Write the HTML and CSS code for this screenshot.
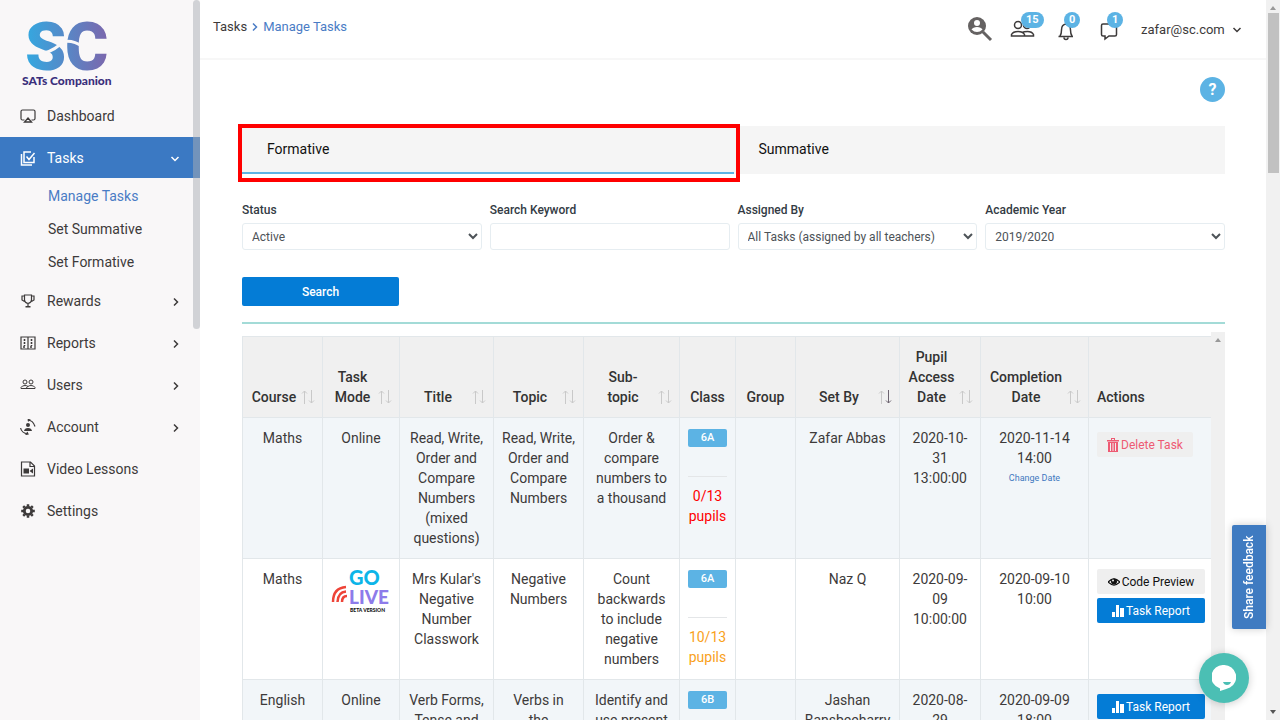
FILE: index.html
```html
<!DOCTYPE html>
<html lang="en">
<head>
  <meta charset="UTF-8">
  <meta name="viewport" content="width=device-width, initial-scale=1.0">
  <title>Manage Tasks - SATs Companion</title>
  <link rel="stylesheet" href="styles.css">
</head>
<body>
<svg class="defs" aria-hidden="true">
  <symbol id="sort" viewBox="0 0 14 16">
    <path d="M3.5 15V2M1 4.5L3.5 2L6 4.5" fill="none" stroke="#c9c9c9"/>
    <path class="down" d="M10.500 1v13M8 11.500L10.500 14L13 11.500" fill="none" stroke="currentColor"/>
  </symbol>
  <symbol id="right" viewBox="0 0 8 10"><path d="M2 1.500L5.500 5L2 8.500" fill="none" stroke="currentColor" stroke-width="1.500"/></symbol>
  <symbol id="down" viewBox="0 0 10 8"><path d="M1.500 2L5 5.500L8.500 2" fill="none" stroke="currentColor" stroke-width="1.500"/></symbol>
  <symbol id="bars" viewBox="0 0 12 12"><path d="M0 7h3v5H0zM4 0h3v12H4zM8 3h4v9H8z" fill="currentColor"/></symbol>
</svg>

<div class="app">
  <aside class="sidebar">
    <div class="logo">
      <svg viewBox="0 0 90 54" role="img" aria-label="SC">
        <defs>
          <linearGradient id="brand" gradientUnits="userSpaceOnUse" x1="4" y1="0" x2="84" y2="0">
            <stop offset="0" stop-color="#34a8e0"/>
            <stop offset="1" stop-color="#7a68ae"/>
          </linearGradient>
        </defs>
        <g class="logo-mark" fill="url(#brand)">
          <text x="3" y="50">S</text>
          <text x="43" y="50">C</text>
        </g>
        <path d="M22 33C30 31 36 27 40 22C48 20 54 22 61 27" fill="none" stroke="#f9f7f8" stroke-width="3"/>
      </svg>
      <span>SATs Companion</span>
    </div>
    <nav>
      <a class="nav-item" href="#">
        <svg viewBox="0 0 16 16"><path d="M4.500 12H2.500Q1 12 1 10.500V3.500Q1 2 2.500 2h11Q15 2 15 3.500v7Q15 12 13.500 12h-2" fill="none" stroke="currentColor" stroke-width="1.200"/><path d="M8 10l3.500 4h-7z" fill="none" stroke="currentColor" stroke-width="1.300"/></svg>
        <span>Dashboard</span>
      </a>
      <a class="nav-item active" href="#">
        <svg viewBox="0 0 16 16"><path d="M14 7v5.500H4V2h7M1.500 4v11H12M6.500 6.500L9 9.500L14.500 3" fill="none" stroke="currentColor" stroke-width="1.500"/></svg>
        <span>Tasks</span>
        <svg class="arrow" viewBox="0 0 10 8"><use href="#down"/></svg>
      </a>
      <div class="subnav">
        <a class="current" href="#">Manage Tasks</a>
        <a href="#">Set Summative</a>
        <a href="#">Set Formative</a>
      </div>
      <a class="nav-item" href="#">
        <svg viewBox="0 0 16 16"><path d="M4.500 2h7v5Q11.500 9.500 8 10.500Q4.500 9.500 4.500 7zM4.500 3H2v4l2.500 1.500M11.500 3H14v4l-2.500 1.500M8 10.500V14" fill="none" stroke="currentColor" stroke-width="1.200"/><path d="M5.500 13h5v1.500h-5z" fill="currentColor"/></svg>
        <span>Rewards</span>
        <svg class="arrow" viewBox="0 0 8 10"><use href="#right"/></svg>
      </a>
      <a class="nav-item" href="#">
        <svg viewBox="0 0 16 16"><path d="M1 2h14v12H1zM8 2v12" fill="none" stroke="currentColor" stroke-width="1.200"/><path d="M4.500 4v7M11.500 4v7M3 12h3M10 12h3" stroke="currentColor" stroke-width="1.600" stroke-dasharray="2 1"/></svg>
        <span>Reports</span>
        <svg class="arrow" viewBox="0 0 8 10"><use href="#right"/></svg>
      </a>
      <a class="nav-item" href="#">
        <svg viewBox="0 0 16 16"><g fill="none" stroke="currentColor"><circle cx="5" cy="5" r="2"/><circle cx="11" cy="5" r="2"/><path d="M1 11.500V10.500Q2 8.500 5 8.500Q7 8.500 8 9.500Q9 8.500 11 8.500Q14 8.500 15 10.500v1zM6 11.500Q6.500 10 8 9.500"/></g></svg>
        <span>Users</span>
        <svg class="arrow" viewBox="0 0 8 10"><use href="#right"/></svg>
      </a>
      <a class="nav-item" href="#">
        <svg viewBox="0 0 16 16"><circle cx="8" cy="6" r="2" fill="currentColor"/><path d="M4 12Q4.500 9 8 9T12 12z" fill="currentColor"/><path d="M7.500 1Q13 1 15 7.500M10.500 1L8.500 .500v2M.600 9Q1.500 14 8 15M5.500 15.500L8 15L7 13" fill="none" stroke="currentColor" stroke-width="1.200"/></svg>
        <span>Account</span>
        <svg class="arrow" viewBox="0 0 8 10"><use href="#right"/></svg>
      </a>
      <a class="nav-item" href="#">
        <svg viewBox="0 0 16 16"><path d="M1.500 1H10.500L14.500 5V15H1.500zM10 1v4.500h4.500" fill="none" stroke="currentColor" stroke-width="1.200"/><path d="M3.500 7.500h5.500v5H3.500zM9.500 10L13 7.500v5z" fill="currentColor"/></svg>
        <span>Video Lessons</span>
      </a>
      <a class="nav-item" href="#">
        <svg viewBox="0 0 16 16"><circle cx="8" cy="8" r="3.700" fill="none" stroke="currentColor" stroke-width="2.800"/><path d="M8 1.200v2M8 12.800v2M1.200 8h2M12.800 8h2M3.200 3.200l1.500 1.500M11.300 11.300l1.500 1.500M3.200 12.800l1.500-1.500M11.300 4.700l1.500-1.500" stroke="currentColor" stroke-width="2.500"/></svg>
        <span>Settings</span>
      </a>
    </nav>
    <div class="sidebar-thumb"></div>
  </aside>

  <main class="main">
    <header class="topbar">
      <div class="breadcrumb">
        <a href="#">Tasks</a>
        <svg viewBox="0 0 8 10"><use href="#right"/></svg>
        <a class="current" href="#">Manage Tasks</a>
      </div>
      <div class="tools">
        <button class="tool" aria-label="Search users">
          <svg class="wide" viewBox="0 0 26 26"><circle cx="10" cy="10" r="9" fill="#656262"/><path d="M16 16l8 8" stroke="#656262" stroke-width="3"/><circle cx="10" cy="7" r="3" fill="#fff"/><path d="M4.500 13.500Q6 11 10 11T15.500 13.500Q13 16 10 16T4.500 13.500z" fill="#fff"/></svg>
        </button>
        <button class="tool" aria-label="Pupils">
          <svg class="wide" viewBox="0 0 26 26"><g fill="none" stroke="currentColor" stroke-width="1.500"><circle cx="8" cy="9" r="3.500"/><circle cx="17" cy="9" r="3.500"/><path d="M1.500 20V18.500Q3 15.500 8 15.500T14.500 18.500V20zM12 16.500Q14 15.500 17.500 15.500Q22 15.500 23.500 18.500V20H14"/></g></svg>
          <span class="count">15</span>
        </button>
        <button class="tool" aria-label="Notifications">
          <svg viewBox="0 0 18 20"><path d="M1.500 15.500h14.500M3 15Q4.500 13 4.500 9Q4.500 3.500 9 3Q13.500 3.500 13.500 9Q13.500 13 15 15M7 16.500Q7 18.500 9 18.500T11 16.500M9 1v2" fill="none" stroke="currentColor" stroke-width="1.500"/></svg>
          <span class="count">0</span>
        </button>
        <button class="tool" aria-label="Messages">
          <svg viewBox="0 0 18 20"><path d="M3 3h12q1.500 0 1.500 1.500v9Q16.500 15 15 15H9l-4 3v-3H3Q1.500 15 1.500 13.500v-9Q1.500 3 3 3z" fill="none" stroke="currentColor" stroke-width="1.500"/></svg>
          <span class="count">1</span>
        </button>
        <button class="account">zafar@sc.com <svg viewBox="0 0 10 8"><use href="#down"/></svg></button>
      </div>
    </header>

    <section class="content">
      <div class="help-row"><button class="help" aria-label="Help">?</button></div>

      <div class="tabs">
        <a class="tab selected" href="#">Formative</a>
        <a class="tab" href="#">Summative</a>
      </div>

      <form class="filters">
        <div class="field">
          <label for="status">Status</label>
          <select id="status"><option>Active</option></select>
        </div>
        <div class="field">
          <label for="keyword">Search Keyword</label>
          <input type="text" id="keyword">
        </div>
        <div class="field">
          <label for="assigned">Assigned By</label>
          <select id="assigned"><option>All Tasks (assigned by all teachers)</option></select>
        </div>
        <div class="field">
          <label for="year">Academic Year</label>
          <select id="year"><option>2019/2020</option></select>
        </div>
        <button class="search" type="button">Search</button>
      </form>

      <div class="table-box">
        <div class="table-scroll">
          <table>
            <colgroup>
              <col class="c-course"><col class="c-mode"><col class="c-title"><col class="c-topic"><col class="c-sub">
              <col class="c-class"><col class="c-group"><col class="c-set"><col class="c-access"><col class="c-done"><col class="c-actions">
            </colgroup>
            <thead>
              <tr>
                <th class="sortable">Course<svg><use href="#sort"/></svg></th>
                <th class="sortable">Task Mode<svg><use href="#sort"/></svg></th>
                <th class="sortable">Title<svg><use href="#sort"/></svg></th>
                <th class="sortable">Topic<svg><use href="#sort"/></svg></th>
                <th class="sortable">Sub-<br>topic<svg><use href="#sort"/></svg></th>
                <th>Class</th>
                <th>Group</th>
                <th class="sortable sorted">Set By<svg><use href="#sort"/></svg></th>
                <th class="sortable">Pupil Access Date<svg><use href="#sort"/></svg></th>
                <th class="sortable">Completion Date<svg><use href="#sort"/></svg></th>
                <th class="left">Actions</th>
              </tr>
            </thead>
            <tbody>
              <tr>
                <td>Maths</td>
                <td>Online</td>
                <td>Read, Write, Order and Compare Numbers (mixed questions)</td>
                <td>Read, Write, Order and Compare Numbers</td>
                <td>Order &amp; compare numbers to a thousand</td>
                <td><span class="badge">6A</span><hr><span class="none-done">0/13 pupils</span></td>
                <td></td>
                <td>Zafar Abbas</td>
                <td>2020-10-31 13:00:00</td>
                <td>2020-11-14 14:00 <a class="change" href="#">Change Date</a></td>
                <td class="left">
                  <button class="btn delete"><svg viewBox="0 0 12 14"><path d="M1 4h10v10H1zM0 2h12v1.500H0zM4 0h4v2H7V1H5v1H4z" fill="currentColor"/><path d="M3.500 5v8M6 5v8M8.500 5v8" stroke="#efefef"/></svg>Delete Task</button>
                </td>
              </tr>
              <tr>
                <td>Maths</td>
                <td>
                  <svg class="golive" viewBox="0 0 60 44" role="img" aria-label="Go Live beta version">
                    <g fill="none" stroke="#ee4438" stroke-width="2.500"><path d="M2 33Q2 19 15 18"/><path d="M6.500 33Q7 23 15 22.500"/><path d="M11 33Q11 27 16 27"/></g>
                    <text class="go" x="18" y="16">GO</text>
                    <text class="live" x="18" y="35">LIVE</text>
                    <text class="beta" x="19" y="43">BETA VERSION</text>
                  </svg>
                </td>
                <td>Mrs Kular's Negative Number Classwork</td>
                <td>Negative Numbers</td>
                <td>Count backwards to include negative numbers</td>
                <td><span class="badge">6A</span><hr><span class="some-done">10/13 pupils</span></td>
                <td></td>
                <td>Naz Q</td>
                <td>2020-09-09 10:00:00</td>
                <td>2020-09-10 10:00</td>
                <td class="left">
                  <button class="btn preview"><svg viewBox="0 0 12 12"><path d="M0 6Q6 0 12 6Q6 12 0 6z" fill="none" stroke="currentColor" stroke-width="1.200"/><circle cx="6" cy="5.500" r="3" fill="currentColor"/><circle cx="5" cy="4.500" r="1" fill="#efefef"/></svg>Code Preview</button>
                  <button class="btn report"><svg viewBox="0 0 12 12"><use href="#bars"/></svg>Task Report</button>
                </td>
              </tr>
              <tr>
                <td>English</td>
                <td>Online</td>
                <td>Verb Forms, Tense and</td>
                <td>Verbs in the</td>
                <td>Identify and use present</td>
                <td><span class="badge">6B</span></td>
                <td></td>
                <td>Jashan Bansbeeharry</td>
                <td>2020-08-29</td>
                <td>2020-09-09 18:00</td>
                <td class="left">
                  <button class="btn report"><svg viewBox="0 0 12 12"><use href="#bars"/></svg>Task Report</button>
                </td>
              </tr>
            </tbody>
          </table>
        </div>
        <div class="table-track"><i class="tri-up"></i></div>
      </div>
    </section>
  </main>

  <div class="page-track"><i class="tri-up"></i><div class="page-thumb"></div><i class="tri-down"></i></div>
</div>

<button class="feedback">Share feedback</button>
<button class="chat" aria-label="Chat">
  <svg viewBox="0 0 24 26"><path d="M12 0A12 12 0 0 1 18 22.500Q14 24 8 26V23.500A12 12 0 0 1 12 0z" fill="#fff"/><path d="M11 17h8q-1 3-4 3t-4-3z" fill="#4bbfb4"/></svg>
</button>
</body>
</html>
```

FILE: styles.css
```css
* {
  box-sizing: border-box;
}
body {
  margin: 0;
  font-family: Roboto, "Open Sans", sans-serif;
  font-size: 14px;
  line-height: 20px;
  color: #3d3a3a;
  background: #fff;
  overflow: hidden;
}
a {
  color: inherit;
  text-decoration: none;
}
button, input, select {
  font-family: inherit;
  margin: 0;
}
button {
  border: 0;
  padding: 0;
  color: inherit;
  background: none;
  cursor: pointer;
}
.defs {
  position: absolute;
  width: 0;
  height: 0;
}
.app {
  display: flex;
  height: 100vh;
}

/* sidebar */
.sidebar {
  position: relative;
  flex: 0 0 200px;
  background: #f9f7f8;
}
.logo {
  height: 95px;
  padding: 20px 0 0 22px;
}
.logo svg {
  display: block;
  width: 90px;
  height: 54px;
  overflow: visible;
}
.logo-mark {
  font-size: 66px;
  font-weight: 900;
}
.logo span {
  display: block;
  font-family: Lato, sans-serif;
  font-size: 12px;
  font-weight: 900;
  line-height: 14px;
  color: #3b2f7c;
}
.nav-item {
  display: flex;
  align-items: center;
  height: 42px;
  padding: 0 20px;
}
.nav-item svg {
  width: 16px;
  height: 16px;
  margin-right: 11px;
}
.nav-item .arrow {
  width: 8px;
  height: 10px;
  margin: 2px 0 0 auto;
}
.nav-item.active {
  height: 41px;
  color: #fff;
  background: #3b79c3;
}
.nav-item.active .arrow {
  width: 10px;
  height: 8px;
}
.subnav {
  padding: 2px 0 1px;
}
.subnav a {
  display: block;
  padding-left: 48px;
  line-height: 33px;
}
.current {
  color: #4a7cc5;
}
.sidebar-thumb {
  position: absolute;
  top: 0;
  right: 0;
  width: 7px;
  height: 329px;
  border-radius: 4px;
  background: rgba(170, 173, 180, 0.5);
}

/* top bar */
.main {
  flex: 1;
  min-width: 0;
  display: flex;
  flex-direction: column;
}
.topbar {
  display: flex;
  justify-content: space-between;
  flex: 0 0 60px;
  padding: 0 24px 0 13px;
  border-bottom: 2px solid #f7f7f7;
}
.breadcrumb {
  display: flex;
  align-items: center;
  gap: 4px;
  height: 54px;
  font-size: 13px;
}
.breadcrumb svg {
  width: 8px;
  height: 10px;
  color: #4a7cc5;
}
.tools {
  display: flex;
  align-items: center;
}
.tool {
  position: relative;
  width: 26px;
  height: 26px;
  margin-right: 17px;
}
.tool svg {
  display: block;
  width: 18px;
  height: 20px;
  margin: 4px auto 0;
}
.tool svg.wide {
  width: 26px;
  height: 26px;
  margin: 0;
}
.count {
  position: absolute;
  top: -4px;
  left: 11px;
  min-width: 16px;
  padding: 0 5px;
  border-radius: 8px;
  background: #5cb3e4;
  color: #fff;
  font-size: 11px;
  font-weight: 700;
  line-height: 16px;
}
.account {
  margin-left: 2px;
  font-size: 13px;
}
.account svg {
  width: 10px;
  height: 8px;
  margin-left: 4px;
}

/* content */
.content {
  flex: 1;
  min-height: 0;
  display: flex;
  flex-direction: column;
  padding: 17px 41px 0 42px;
}
.help-row {
  text-align: right;
  height: 49px;
}
.help {
  width: 25px;
  height: 25px;
  border-radius: 50%;
  background: #5cb3e4;
  color: #fff;
  font-size: 16px;
  font-weight: 700;
}
.tabs {
  display: flex;
  background: #f5f5f5;
}
.tab {
  position: relative;
  flex: 1;
  padding: 13px 25px;
  border-bottom: 2px solid transparent;
  color: #111;
}
.tab.selected {
  border-color: #5cb3e4;
}
.tab.selected::after {
  content: "";
  position: absolute;
  inset: -2px -6px -10px -4px;
  border: 4px solid #f00;
}
.filters {
  display: grid;
  grid-template-columns: repeat(4, 1fr);
  column-gap: 8px;
  padding: 26px 0 16px;
  border-bottom: 2px solid #a3dbd7;
}
.field label {
  display: block;
  margin-bottom: 3px;
  font-size: 12px;
  font-weight: 500;
  color: #333b44;
}
.field select, .field input {
  display: block;
  width: 100%;
  height: 27px;
  padding: 0 5px;
  border: 1px solid #e6edf1;
  border-radius: 3px;
  background: #fff;
  color: #4d5358;
  font-size: 12px;
}
.search {
  width: 157px;
  height: 29px;
  margin-top: 27px;
  border-radius: 2px;
  background: #047cd6;
  color: #fff;
  font-size: 12px;
  font-weight: 500;
}

/* tasks table */
.table-box {
  display: flex;
  flex: 1;
  min-height: 0;
  margin-top: 8px;
}
.table-scroll {
  flex: 1;
  min-width: 0;
  padding-top: 4px;
  overflow: hidden;
}
table {
  width: 100%;
  table-layout: fixed;
  border-collapse: separate;
  border-spacing: 0;
  border-left: 1px solid #e2e7ea;
  border-top: 1px solid #e2e7ea;
}
.c-course { width: 80px; }
.c-mode { width: 77px; }
.c-title { width: 94px; }
.c-topic { width: 90px; }
.c-sub { width: 96px; }
.c-class { width: 56px; }
.c-group { width: 60px; }
.c-set { width: 104px; }
.c-access { width: 81px; }
.c-done { width: 108px; }
.c-actions { width: 122px; }
th, td {
  position: relative;
  padding: 10px 8px;
  border-right: 1px solid #e2e7ea;
  border-bottom: 1px solid #e2e7ea;
  text-align: center;
  vertical-align: top;
}
th:last-child, td:last-child {
  border-right: 0;
}
th {
  background: #f0f0f0;
  font-weight: 500;
  vertical-align: bottom;
  color: #333;
}
.sortable {
  padding-right: 25px;
}
.sortable svg {
  position: absolute;
  right: 7px;
  bottom: 12px;
  width: 14px;
  height: 16px;
  color: #c9c9c9;
}
.sorted svg {
  color: #6d6470;
}
.left {
  text-align: left;
}
tbody tr:nth-child(odd) {
  background: #f2f6f9;
}
.badge {
  display: block;
  height: 18px;
  margin-top: 1px;
  border-radius: 2px;
  background: #5cb3e4;
  color: #fff;
  font-size: 11px;
  font-weight: 500;
  line-height: 18px;
}
td hr {
  height: 1px;
  margin: 29px 0 9px;
  border: 0;
  background: #e4e6e8;
}
.none-done {
  color: #f00;
}
.some-done {
  color: #f9a11b;
}
.change {
  display: block;
  color: #3f78c0;
  font-size: 9px;
}
.golive {
  display: block;
  width: 60px;
  height: 44px;
  overflow: visible;
}
.golive text {
  font-family: Lato, sans-serif;
  font-weight: 900;
}
.golive .go {
  font-size: 20px;
  fill: #0db5e8;
}
.golive .live {
  font-size: 19px;
  fill: #8d7bea;
}
.golive .beta {
  font-size: 5px;
  fill: #111;
}
.btn {
  display: flex;
  align-items: center;
  justify-content: center;
  gap: 2px;
  width: 108px;
  height: 25px;
  margin-top: 4px;
  border-radius: 2px;
  font-size: 12px;
}
.btn svg {
  width: 12px;
  height: 12px;
}
.delete {
  width: 96px;
  background: #efefef;
  color: #ee5a73;
}
.delete svg {
  height: 14px;
}
.preview {
  margin-top: 0;
  background: #efefef;
  color: #111;
}
.report {
  background: #047cd6;
  color: #fff;
}

/* scrollbars */
.table-track {
  flex: 0 0 14px;
  background: #f0f0f0;
}
.page-track {
  display: flex;
  flex-direction: column;
  flex: 0 0 14px;
  background: #f1f1f1;
}
.page-thumb {
  height: 160px;
  margin: 3px 1px auto 2px;
  background: #c1c1c1;
}
.tri-up, .tri-down {
  display: block;
  width: 0;
  margin: 6px auto 0;
  border: 3px solid transparent;
}
.tri-up {
  border-top: 0;
  border-bottom: 4px solid #999;
}
.tri-down {
  margin: 0 auto 6px;
  border-bottom: 0;
  border-top: 4px solid #555;
}

/* floating widgets */
.feedback {
  position: fixed;
  right: 14px;
  bottom: 91px;
  width: 34px;
  height: 104px;
  writing-mode: vertical-rl;
  transform: rotate(180deg);
  border-radius: 0 2px 2px 0;
  background: #3f7bc1;
  color: #fff;
  font-size: 12px;
  font-weight: 500;
  box-shadow: 0 0 8px rgba(0, 0, 0, 0.2);
}
.chat {
  position: fixed;
  right: 31px;
  bottom: 17px;
  width: 50px;
  height: 50px;
  border-radius: 50%;
  background: #4bbfb4;
  box-shadow: 0 1px 8px rgba(0, 0, 0, 0.2);
}
.chat svg {
  display: block;
  width: 24px;
  height: 26px;
  margin: 0 auto;
}
```
